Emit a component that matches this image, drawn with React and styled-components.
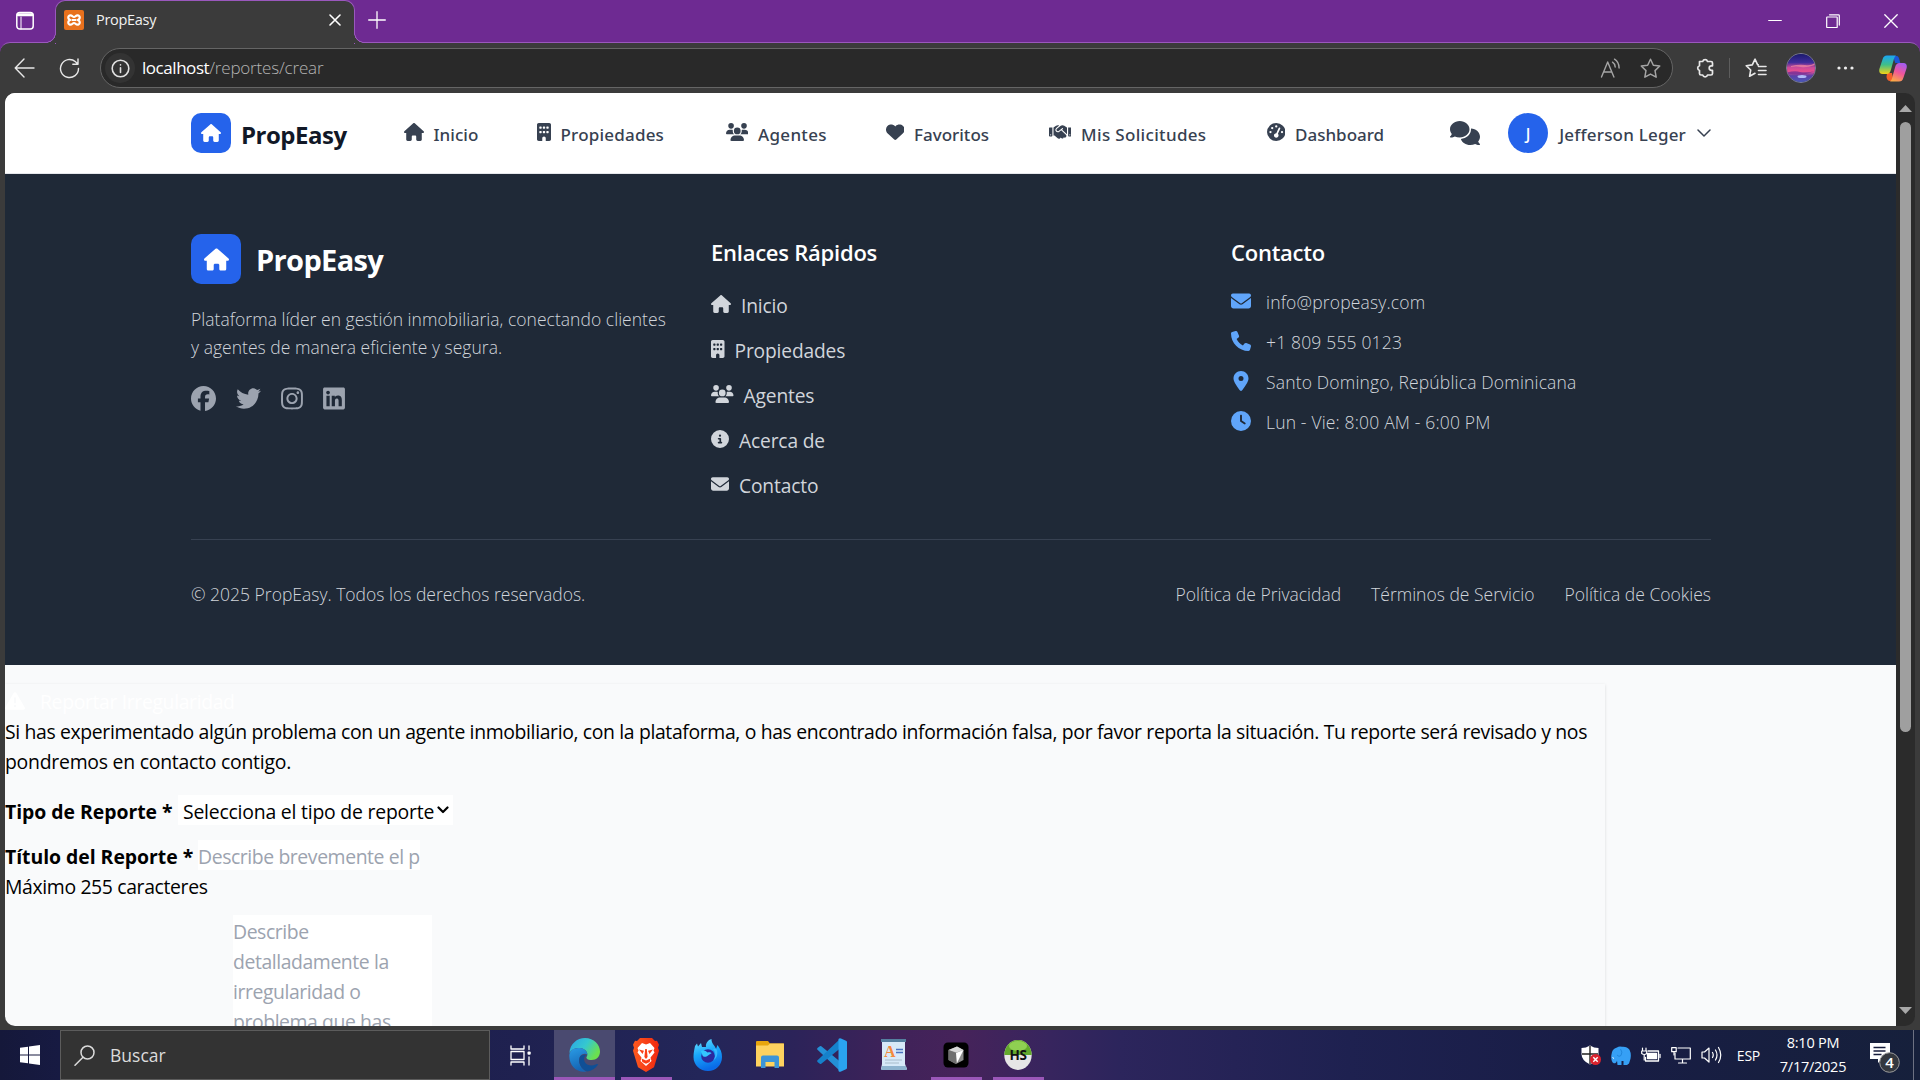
import React from 'react';
import styled, { createGlobalStyle } from 'styled-components';
import {
  FaHouse, FaBuilding, FaUsers, FaHeart, FaHandshake, FaGaugeHigh, FaComments, FaCircleInfo,
  FaEnvelope, FaPhone, FaLocationDot, FaClock, FaTriangleExclamation, FaFacebook, FaTwitter,
  FaInstagram, FaLinkedin,
} from 'react-icons/fa6';

const Global = createGlobalStyle`
  *, *::before, *::after { box-sizing: border-box; }
  body { margin: 0; overflow: hidden; background: #3b3b3b; }
  body, input, textarea, select { font-family: "Open Sans", "Noto Sans", sans-serif; }
  svg { display: block; flex: none; }
`;

/* ---------- window ---------- */
const Screen = styled.div`
  width: 1920px; height: 1080px; display: flex; flex-direction: column; overflow: hidden;
  background: #3b3b3b;
`;
const TabStrip = styled.div`
  height: 43px; flex: none; display: flex; align-items: flex-start; background: #6e2a92; color: #fff;
`;
const TabActions = styled.div`
  width: 55px; height: 42px; padding: 11px 0 0 15px;
`;
const Tab = styled.div`
  position: relative; width: 300px; height: 44px; padding: 0 13px 5px 8px; display: flex; align-items: center;
  background: #3b3b3b; border: 1px solid #9a58bd; border-bottom: 0; border-radius: 10px 10px 0 0; z-index: 1;
  &::before, &::after {
    content: ""; position: absolute; bottom: 1px; width: 10px; height: 10px;
  }
  &::before { left: -10px; background: radial-gradient(circle at 0 0, transparent 8.6px, #9a58bd 9px, #9a58bd 9.6px, #3b3b3b 10px); }
  &::after { right: -10px; background: radial-gradient(circle at 100% 0, transparent 8.6px, #9a58bd 9px, #9a58bd 9.6px, #3b3b3b 10px); }
`;
const TabTitle = styled.span`
  flex: 1; margin-left: 12px; font-size: 14.5px; letter-spacing: -0.3px; color: #f2f2f2; line-height: 20px;
`;
const NewTab = styled.div`margin: 11px 0 0 13px;`;
const WindowButtons = styled.div`
  margin-left: auto; padding: 14px 22px 0 0; display: flex; gap: 44px;
`;
const AddressRow = styled.div`background: #6e2a92; flex: none;`;
const Toolbar = styled.div`
  height: 51px; margin-top: -1px; display: flex; align-items: center; padding: 0 13px 0 14px;
  background: #3b3b3b; border-top: 1px solid #9a58bd; border-radius: 10px 10px 0 0; color: #e8e8e8;
`;
const Reload = styled.div`margin: 0 20px 0 24px;`;
const AddressBar = styled.div`
  width: 1573px; height: 40px; display: flex; align-items: center; padding: 0 11px 0 4px;
  background: #292929; border: 1px solid #656565; border-radius: 20px; color: #a5a5a5;
`;
const SiteInfo = styled.span`
  width: 30px; height: 30px; border-radius: 50%; display: grid; place-items: center; background: #333; color: #e0e0e0;
`;
const Url = styled.span`
  flex: 1; margin-left: 7px; font-size: 17px; font-weight: 300; letter-spacing: -0.18px; line-height: 24px; color: #b4b4b4;
  b { font-weight: 400; letter-spacing: -0.45px; color: #fff; }
`;
const BarIcons = styled.span`display: flex; gap: 19px; align-items: center;`;
const ToolIcons = styled.div`
  flex: 1; margin-left: 22px; display: flex; align-items: center;
`;
const Divider = styled.i`width: 1px; height: 20px; background: #5d5d5d; margin: 0 15px 0 14px;`;
const Profile = styled.div`
  width: 30px; height: 30px; margin: 0 21px 0 19px; border-radius: 50%; border: 1px solid #7f7f9b; overflow: hidden;
`;
const Dots = styled.div`margin-right: 25px;`;

/* ---------- page ---------- */
const Viewport = styled.div`
  height: 937px; flex: none; display: flex; padding: 0 5px 4px 5px; background: #3b3b3b;
`;
const Page = styled.div`
  width: 1891px; height: 933px; overflow: hidden; border-radius: 10px 0 0 10px; background: #f9fafb;
`;
const Scroll = styled.div`
  width: 19px; height: 933px; display: flex; flex-direction: column; align-items: center; padding: 12px 0;
  background: #2b2b2b; border-radius: 0 10px 10px 0;
`;
const Thumb = styled.div`width: 11px; height: 610px; margin: 10px 0 auto; border-radius: 6px; background: #9f9f9f;`;
const Navbar = styled.header`
  height: 81px; background: #fff; border-bottom: 1px solid #e5e7eb; padding: 0 185px 0 186px; display: flex; align-items: center;
  color: #374151;
`;
const Logo = styled.div`display: flex; align-items: center; gap: ${p => (p.$large ? 15 : 10)}px;`;
const LogoMark = styled.span`
  width: ${p => (p.$large ? 50 : 40)}px; height: ${p => (p.$large ? 50 : 40)}px; border-radius: 10px;
  display: grid; place-items: center; background: #2563eb; color: #fff;
  svg { height: ${p => (p.$large ? 25 : 20)}px; width: auto; }
`;
const LogoText = styled.span`
  font-weight: 700; font-size: ${p => (p.$large ? 29 : 24)}px; letter-spacing: ${p => (p.$large ? -0.65 : -0.5)}px;
  line-height: 36px; padding-top: ${p => (p.$large ? 2 : 3)}px; color: ${p => (p.$large ? '#fff' : '#111827')};
`;
const NavList = styled.nav`display: flex; margin-left: 57px; align-items: center;`;
const NavItem = styled.a`
  width: ${p => p.$w}px; display: flex; align-items: center; gap: 10px; white-space: nowrap;
  font: 500 17px/26px "Noto Sans", sans-serif; letter-spacing: ${p => p.$track}px;
  svg { height: 18px; width: ${p => p.$icon}px; margin-bottom: 2px; }
  span { padding-top: 3px; }
`;
const UserArea = styled.div`margin-left: auto; display: flex; align-items: center;`;
const Avatar = styled.span`
  width: 40px; height: 40px; margin: 0 11px 0 28px; border-radius: 50%; display: grid; place-items: center;
  background: #2563eb; color: #fff; font: 500 16px/24px "Noto Sans", sans-serif; padding-top: 2px;
`;
const UserName = styled.span`
  font: 500 17px/26px "Noto Sans", sans-serif; letter-spacing: 0.2px; padding-top: 3px; margin-right: 11px;
`;

const Footer = styled.footer`
  height: 491px; background: #1f2937; padding: 60px 185px 0 186px; color: #d1d5db;
`;
const Columns = styled.div`
  height: 306px; display: grid; grid-template-columns: repeat(3, 480px); gap: 40px; border-bottom: 1px solid #374151;
  margin-bottom: 41px;
`;
const About = styled.p`
  margin: 21px 0 24px; font-size: 17.5px; font-weight: 300; line-height: 28.4px; white-space: nowrap; letter-spacing: 0.03px;
`;
const Social = styled.div`
  display: flex; align-items: center; color: #9ca3af;
  svg { height: 25px; width: 25px; margin-right: 20px; }
  svg:nth-child(n + 3) { width: 22px; }
`;
const Heading = styled.h3`
  margin: 0 0 21px; color: #fff; font-size: 22px; font-weight: 600; line-height: 36px; letter-spacing: -0.24px;
`;
const LinkItem = styled.a`
  height: 30px; margin-bottom: 15px; display: flex; align-items: center; gap: 10px; font-size: 19.2px; letter-spacing: -0.15px;
  line-height: 30px;
  svg { height: 18px; width: ${p => p.$icon}px; margin-bottom: 4px; }
`;
const ContactItem = styled.div`
  height: 20px; margin-bottom: 20px; display: flex; align-items: center; gap: 15px; font-size: 17.5px; font-weight: 300;
  line-height: 20px; letter-spacing: 0.17px;
  svg { height: 20px; width: 20px; color: #60a5fa; }
  span { padding-top: 2px; }
`;
const ContactList = styled.div`margin-top: 1px;`;
const Legal = styled.div`
  display: flex; font-size: 17.5px; font-weight: 300; line-height: 26px; 
  span:first-child { margin-right: auto; }
  a { margin-left: 30px; }
`;

const FormBox = styled.section`
  width: 1600px; margin-top: 19px; height: 400px; padding-top: 3px; box-shadow: 0 1px 3px rgba(0, 0, 0, 0.13);
  font-size: 19.4px; line-height: 30px; letter-spacing: -0.36px; color: #000;
`;
const FormTitle = styled.h5`
  margin: 0; height: 30px; display: flex; align-items: center; gap: 15px; color: #fff; font-size: inherit; font-weight: 400;
  svg { height: 20px; width: 20px; margin-bottom: 2px; }
`;
const Intro = styled.p`
  margin: 0 0 18px; white-space: nowrap;
  span { display: block; letter-spacing: -0.24px; }
`;
const Field = styled.div`display: flex; align-items: center; height: 30px; margin-top: ${p => p.$top || 0}px;`;
const Label = styled.label`
  width: ${p => p.$w}px; padding-top: 4px; line-height: 26px; font-weight: 700; letter-spacing: -0.03px; white-space: nowrap;
`;
const SelectBox = styled.div`
  width: 275px; height: 30px; padding: 4px 4px 0 5px; display: flex; justify-content: space-between; line-height: 26px;
  letter-spacing: -0.21px; background: #fff; white-space: nowrap;
  svg { margin-top: 5px; }
`;
const TextInput = styled.input`
  width: 222px; height: 30px; padding: 3px 0 0; border: 0; font-size: 19.4px; letter-spacing: -0.41px; background: #fff;
  &::placeholder { color: #9ca3af; }
`;
const Hint = styled.div`margin: 2px 0 13px; line-height: 30px;`;
const Details = styled.textarea`
  display: block; width: 199px; height: 150px; margin-left: 228px; padding: 2px 0 0; border: 0; resize: none; overflow: hidden;
  font-size: 19.4px; line-height: 30px; letter-spacing: -0.42px; background: #fff;
  &::placeholder { color: #9ca3af; }
`;

/* ---------- taskbar ---------- */
const Taskbar = styled.div`
  height: 50px; flex: none; display: flex; align-items: center; color: #fff;
  background: linear-gradient(90deg, #15183a 0, #171a42 60px, #1f2150 520px, #232659 700px, #2b2359 790px, #402259 900px, #46235a 960px, #37255e 1050px, #2c255c 1120px, #1e2150 1350px, #181d45 1600px, #16203b 1920px);
`;
const Start = styled.div`width: 60px; display: grid; place-items: center;`;
const SearchBox = styled.div`
  width: 430px; height: 50px; border: 1px solid #5c5c5c; background: #333; display: flex; align-items: center; padding-left: 13px;
  gap: 15px; font-size: 17.5px; line-height: 24px; color: #dcdcdc;
`;
const TaskView = styled.div`width: 63px; display: grid; place-items: center; padding-right: 3px;`;
const AppSlot = styled.div`width: 62px; height: 50px; display: flex; justify-content: center;`;
const AppCell = styled.div`
  width: ${p => (p.$active ? 61 : 51)}px; height: 50px; display: grid; place-items: center;
  background: ${p => (p.$active ? '#4a4a70' : 'transparent')};
  border-bottom: 3px solid ${p => (p.$open ? '#9a57b8' : 'transparent')};
  svg { margin-top: 2px; }
`;
const Tray = styled.div`
  margin-left: auto; display: flex; align-items: center; height: 50px; font-size: 14.5px; letter-spacing: -0.25px;
`;
const TrayIcons = styled.div`display: flex; align-items: center; gap: 10px;`;
const Lang = styled.span`margin-left: 15px; font-size: 14px;`;
const Clock = styled.div`width: 68px; margin: 0 22px 0 19px; text-align: center; line-height: 24px; white-space: nowrap;`;
const Notice = styled.div`padding-top: 6px;`;
const Edge = styled.i`width: 1px; height: 50px; background: #6c7182; margin: 0 6px 0 13px;`;

const Line = ({ w, h = w, box, sw = 1.4, children }) => (
  <svg width={w} height={h} viewBox={box || `0 0 ${w} ${h}`} fill="none" stroke="currentColor" strokeWidth={sw} strokeLinecap="round" strokeLinejoin="round">{children}</svg>
);
const starPath = 'M10 1.2l2.7 5.7 6.1.8-4.5 4.3 1.1 6.3L10 15.3l-5.4 3 1.1-6.3L1.2 7.7l6.1-.8z';

const navItems = [
  { Icon: FaHouse, label: 'Inicio', icon: 20, w: 133, track: 0.05 },
  { Icon: FaBuilding, label: 'Propiedades', icon: 14, w: 189, track: 0.2 },
  { Icon: FaUsers, label: 'Agentes', icon: 22.5, w: 160, track: 0.3 },
  { Icon: FaHeart, label: 'Favoritos', icon: 18.5, w: 163, track: 0 },
  { Icon: FaHandshake, label: 'Mis Solicitudes', icon: 22.5, w: 218, track: 0.33 },
  { Icon: FaGaugeHigh, label: 'Dashboard', icon: 18.5, w: 118, track: 0 },
];
const quickLinks = [
  [FaHouse, 'Inicio', 20], [FaBuilding, 'Propiedades', 13.5], [FaUsers, 'Agentes', 22.5],
  [FaCircleInfo, 'Acerca de', 18], [FaEnvelope, 'Contacto', 18],
];
const contacts = [
  [FaEnvelope, 'info@propeasy.com'], [FaPhone, '+1 809 555 0123'],
  [FaLocationDot, 'Santo Domingo, República Dominicana'], [FaClock, 'Lun - Vie: 8:00 AM - 6:00 PM'],
];

const EdgeLogo = () => (
  <svg width="31" height="34" viewBox="0 0 31 34">
    <defs>
      <linearGradient id="ea" x1="0" y1="0" x2="1" y2=".5"><stop stopColor="#2aa4e8" /><stop offset=".55" stopColor="#35c8cf" /><stop offset="1" stopColor="#6be04e" /></linearGradient>
      <linearGradient id="eb" x1="0" y1="0" x2=".3" y2="1"><stop stopColor="#2a9ce6" /><stop offset="1" stopColor="#1565b4" /></linearGradient>
    </defs>
    <path d="M.4 15C1 6 8 0 16 0c9 0 15 6.500 15 13.500 0 5-3.500 8.500-8.500 8.500-4 0-5.500-1.500-5-3 1.500-1.500 1.500-6.500-4-8.500C8 9 2.500 11 .4 15z" fill="url(#ea)" />
    <path d="M.3 18C.2 12 6 9.300 11 10c4.500.6 7.500 3.500 7.300 6.500-1.600-1.400-6-1-7.500 2.500-2 5 .5 11 6.500 14.500C8 35 .3 28 .3 18z" fill="url(#eb)" />
    <path d="M10.600 19.500c-1.600 6 2 12 7.500 14 4.500-.5 8.500-3 11-7-.5-1-1.500-.5-2.500 0-5.500 2.500-11.500 0-11.500-5.500 0-1.500.7-3 1.900-4-3-.5-5.600.5-6.400 2.500z" fill="#0f4f96" />
  </svg>
);
const BraveLogo = () => (
  <svg width="26" height="34" viewBox="0 0 26 34">
    <defs><linearGradient id="br" x1="0" x2="1"><stop stopColor="#ff5a1f" /><stop offset="1" stopColor="#f0280f" /></linearGradient></defs>
    <path d="M7 0h12l3 3 2-.3 2 4-1 3 1 3-5 16.500L13 34 5 29.200 0 12.700l1-3-1-3 2-4L4 3z" fill="url(#br)" />
    <path d="M13 6.500l4-1.500 4.500 5-1 2.500 1 2-4 5 1 3.500-5.500 5-5.500-5 1-3.500-4-5 1-2-1-2.500L9 5z" fill="#fff" />
    <path d="M6 11.500l5 1.200-1.500 3.200zM20 11.500l-5 1.200 1.500 3.200zM12.200 11h1.600l.8 8-1.600 2-1.600-2zM8.500 20.500l4.500 2 4.500-2-.8 3.400-3.700 1.800-3.700-1.800z" fill="#fb3f16" />
  </svg>
);
const FirefoxLogo = () => (
  <svg width="30" height="32" viewBox="0 0 30 32">
    <defs><linearGradient id="ff" x1="0" y1="0" x2=".3" y2="1"><stop stopColor="#6fe3ff" /><stop offset=".5" stopColor="#19a8fb" /><stop offset="1" stopColor="#0a6be8" /></linearGradient></defs>
    <path d="M2 7l2-2.500 1 3L8 4l1 4h4c-.5-4 2-7 5.500-8 0 5 3 5.500 4.500 10l1.500-4c3 4 4.500 7.500 4.500 12C29 26 23 32 15 32S.5 26 .5 18C.5 13.500 1.500 10 2 7z" fill="url(#ff)" />
    <circle cx="15" cy="17" r="6.800" fill="#2b2a9e" />
    <path d="M8 12c3-1 5 0 6.500 1.500 2-.5 3.500 0 4 .8-2 .7-3 2.200-4.500 3-2 1-4 .5-4.500-.8z" fill="#34c5ff" />
    <path d="M20 10c3 3 3 8.500 0 11.500 4.500-2 5.500-8.500 3-12z" fill="#37b9ff" />
  </svg>
);
const FolderLogo = () => (
  <svg width="28" height="27" viewBox="0 0 28 27">
    <path d="M0 1a1 1 0 0 1 1-1h11l2 2.500h13a1 1 0 0 1 1 1V8H0z" fill="#e8a50d" />
    <path d="M0 4.500h12l2-2h14V25.500H0z" fill="#fed25f" />
    <path d="M5 27V16.500a2 2 0 0 1 2-2h14a2 2 0 0 1 2 2V27h-4.500v-6h-9v6z" fill="#3d95d8" />
  </svg>
);
const CodeLogo = () => (
  <svg width="30" height="34" viewBox="0 0 30 34">
    <path d="M.8 9.800l2-1.600a1.200 1.200 0 0 1 1.500 0L23 23.500V33L.8 12a1.400 1.400 0 0 1 0-2.200z" fill="#2490d6" />
    <path d="M.8 24.200l2 1.600a1.200 1.200 0 0 0 1.500 0L23 10.500V1L.8 22a1.400 1.400 0 0 0 0 2.200z" fill="#1581cb" />
    <path d="M21.500 1Q22.500-.3 24 .4l5 2.400a1.500 1.500 0 0 1 1 1.500v25.400a1.500 1.500 0 0 1-1 1.500l-5 2.400q-1.500.7-2.500-.6z" fill="#2aa3f0" />
  </svg>
);
const PadLogo = () => (
  <svg width="26" height="32" viewBox="0 0 26 32">
    <path d="M1 1h23v24l2 5H0l1-5z" fill="#d7e9f8" />
    <path d="M0 0h25v3H0z" fill="#557f9f" />
    <path d="M1 27h24l1 4H0z" fill="#8fb4cf" />
    <text x="3" y="18" fontFamily="Liberation Serif, serif" fontWeight="700" fontSize="16" fill="#f38a3c">A</text>
    <path d="M15 10.500h7M15 13.500h7" stroke="#4a73c0" strokeWidth="1.500" />
    <path d="M4 21h17M4 24h14" stroke="#a8bccb" />
  </svg>
);
const CubeLogo = () => (
  <svg width="26" height="26" viewBox="0 0 26 26">
    <rect x=".5" y=".5" width="25" height="25" rx="4.500" fill="#000" />
    <path d="M5.500 8L14 4.500 20.500 8v10l-7.500 4-7.500-4z" fill="#8c8c8c" />
    <path d="M5.500 8L14 4.500 20.500 8l-7 2.500z" fill="#d8d8d8" /><path d="M13 11l7.500-3-6.500 13z" fill="#fff" />
    <path d="M5.500 8l7.500 3v11l-7.500-4z" fill="#6f6f6f" />
  </svg>
);
const HsLogo = () => (
  <svg width="28" height="32" viewBox="0 0 28 32">
    <ellipse cx="14" cy="16" rx="13.700" ry="15" fill="#e6e6e6" />
    <path d="M.3 16a13.700 15 0 0 1 27.400 0z" fill="#63a92c" />
    <ellipse cx="14" cy="7" rx="9" ry="5" fill="#8fd052" />
    <text x="14" y="21" textAnchor="middle" fontFamily="Open Sans, sans-serif" fontWeight="700" fontSize="13.500" letterSpacing="-0.500" fill="#111">HS</text>
  </svg>
);

const apps = [
  [EdgeLogo, true, true], [BraveLogo, true], [FirefoxLogo], [FolderLogo], [CodeLogo], [PadLogo], [CubeLogo, true], [HsLogo, true],
];

const Browser = () => (
  <>
    <TabStrip>
      <TabActions>
        <Line w={20} sw={1.500}><rect x="1.800" y="1.500" width="16.400" height="16.500" rx="3" /><path d="M3 3.700h14" strokeWidth="3" /><path d="M6 6v12" strokeWidth="1" /></Line>
      </TabActions>
      <Tab>
        <svg width="20" height="20" viewBox="0 0 20 20">
          <rect width="20" height="20" rx="2" fill="#e8711d" />
          <path d="M5.500 5.500c2.500-1 3 1.500 4.500 1.500s2-2.500 4.500-1.500c2 1 1.500 3.500-.5 4.500 2 1 2.500 3.500.5 4.500-2.500 1-3-1.500-4.500-1.500s-2 2.500-4.500 1.500c-2-1-1.500-3.500.5-4.500-2-1-2.500-3.500-.5-4.500zM8 10h4" fill="none" stroke="#fff" strokeWidth="2.200" />
        </svg>
        <TabTitle>PropEasy</TabTitle>
        <Line w={12} sw={1.600}><path d="M1 1l10 10M11 1L1 11" /></Line>
      </Tab>
      <NewTab><Line w={18} sw={1.300}><path d="M9 .7v16.600M.7 9h16.600" /></Line></NewTab>
      <WindowButtons>
        <Line w={14} sw={1.200}><path d="M.7 6.500h12.600" /></Line>
        <Line w={14} sw={1.200}><rect x=".7" y="3" width="10.500" height="10.500" rx=".5" /><path d="M3.500.8h9q.8 0 .8.800v9.500" /></Line>
        <Line w={14} sw={1.300}><path d="M.8.8l12.400 12.400M13.200.8L.8 13.200" /></Line>
      </WindowButtons>
    </TabStrip>
    <AddressRow>
      <Toolbar>
        <Line w={21} h={20}><path d="M20 10H1.200M10 1L1.200 10l8.800 9" /></Line>
        <Reload><Line w={21}><path d="M19.500 10.500a9 9 0 1 1-3-6.700L19 6.200M19 1v5.200h-5.200" /></Line></Reload>
        <AddressBar>
          <SiteInfo><Line w={19} sw={1.600}><circle cx="9.500" cy="9.500" r="8.300" /><path d="M9.500 8.700v4.800M9.500 5.800v.2" /></Line></SiteInfo>
          <Url><b>localhost</b>/reportes/crear</Url>
          <BarIcons>
            <Line w={21}><path d="M1.500 19L7.700 4l6.200 15M3.600 14h8.200M12.500 4.200q2.500 1.600 2.700 4.800M14.500 1.200q4.600 3 4.600 8.800" /></Line>
            <Line w={21} box="0 0 20 20"><path d={starPath} /></Line>
          </BarIcons>
        </AddressBar>
        <ToolIcons>
          <Line w={20} sw={1.700}><path d="M4.500 3.500h3.200a2.500 2.500 0 0 1 4.800 0h3.500a1.500 1.500 0 0 1 1.500 1.500v2.800h-1a2.300 2.300 0 0 0 0 4.600h1v3.100a1.500 1.500 0 0 1-1.500 1.500h-3.500a2.500 2.500 0 0 1-4.800 0H6a1.500 1.500 0 0 1-1.500-1.500v-3a2.500 2.500 0 0 1 0-4.800z" /></Line>
          <Divider />
          <Line w={22} h={20} sw={1.600}><path d="M13.300 6.900h-.6L10 1.200 7.300 6.900l-6.100.8 4.500 4.300-1.100 6.300 5.400-3M13.500 8.500h7.500M13.500 12.500h7.500M13.500 16.500h7.500" /></Line>
          <Profile>
            <svg width="28" height="28" viewBox="0 0 28 28">
              <defs><linearGradient id="sky" x1="0" y1="0" x2="0" y2="1"><stop stopColor="#1b1a6e" /><stop offset=".3" stopColor="#3d2c9a" /><stop offset=".48" stopColor="#c94a9b" /><stop offset=".62" stopColor="#e84f8f" /><stop offset=".78" stopColor="#5c3fa8" /><stop offset="1" stopColor="#4a59b8" /></linearGradient></defs>
              <rect width="28" height="28" fill="url(#sky)" />
              <path d="M4 12q8-2 14-1t10-2v2q-9 3-14 2T4 13z" fill="#ee82a0" opacity=".8" /><path d="M0 18.500q8-2 13-.5t15-1l-9 3q-8 1-19-.5z" fill="#7a2f96" opacity=".8" />
              <ellipse cx="15" cy="22.500" rx="4.500" ry="1.500" fill="#bcc7ff" opacity=".9" />
            </svg>
          </Profile>
          <Dots><svg width="17" height="4" viewBox="0 0 17 4" fill="#eee"><circle cx="2" cy="2" r="1.600" /><circle cx="8.500" cy="2" r="1.600" /><circle cx="15" cy="2" r="1.600" /></svg></Dots>
          <svg width="28" height="27" viewBox="0 0 28 27">
            <defs>
              <linearGradient id="ca" x1="0" y1="0" x2="0" y2="1"><stop stopColor="#19a5f5" /><stop offset=".5" stopColor="#3fbf88" /><stop offset="1" stopColor="#f3d416" /></linearGradient>
              <linearGradient id="cb" x1=".7" y1="0" x2=".3" y2="1"><stop stopColor="#a45cf0" /><stop offset=".5" stopColor="#f0559a" /><stop offset="1" stopColor="#fba945" /></linearGradient>
            </defs>
            <path d="M14 1h3.500c2 0 2.500 2 3 4l.8 3h-5z" fill="#1b56d8" />
            <path d="M8 18l5 0 1.500 8H11c-2 0-3-1.500-3.500-4z" fill="#f4602a" />
            <path d="M8 0.500h9c-1.500 1-2 3-2.500 5L12 14.500c-.8 3-2 4.500-4.500 4.500H3.500C.5 19-.3 16.500.5 13.500L3.500 4.500C4.500 1.500 5.500.5 8 .5z" fill="url(#ca)" />
            <path d="M20 26.500h-9c1.500-1 2-3 2.500-5L16 12.500C16.800 9.500 18 8 20.500 8h4c3 0 3.800 2.500 3 5.500l-3 9c-1 3-2 4-4.500 4z" fill="url(#cb)" />
          </svg>
        </ToolIcons>
      </Toolbar>
    </AddressRow>
  </>
);

const Brand = ({ large }) => (
  <Logo $large={large}>
    <LogoMark $large={large}><FaHouse /></LogoMark>
    <LogoText $large={large}>PropEasy</LogoText>
  </Logo>
);

const ReportForm = () => (
  <FormBox>
    <FormTitle><FaTriangleExclamation />Reportar Irregularidad</FormTitle>
    <Intro>
      Si has experimentado algún problema con un agente inmobiliario, con la plataforma, o has encontrado información falsa, por favor reporta la situación. Tu reporte será revisado y nos
      <span>pondremos en contacto contigo.</span>
    </Intro>
    <Field>
      <Label $w={173}>Tipo de Reporte *</Label>
      <SelectBox>
        Selecciona el tipo de reporte
        <Line w={12} h={12} sw={2.200}><path d="M1.500 3.500L6 8l4.500-4.500" /></Line>
      </SelectBox>
    </Field>
    <Field $top={15}>
      <Label $w={193}>Título del Reporte *</Label>
      <TextInput placeholder="Describe brevemente el p" />
    </Field>
    <Hint>Máximo 255 caracteres</Hint>
    <Details placeholder="Describe detalladamente la irregularidad o problema que has" />
  </FormBox>
);

const SystemTray = () => (
  <Tray>
    <TrayIcons>
      <svg width="20" height="20" viewBox="0 0 20 20"><path d="M9 .5q4 2.500 8.500 2.500v6q0 6.500-8.500 10.500Q.5 15.500.5 9V3Q5 3 9 .5z" fill="#fff" /><path d="M9 1v18M1 9h16" stroke="#222" strokeWidth="1.400" /><circle cx="14.500" cy="14.500" r="5.500" fill="#d9232e" /><path d="M12.300 12.300l4.400 4.400M16.700 12.300l-4.400 4.400" stroke="#fff" strokeWidth="1.400" /></svg>
      <svg width="20" height="19" viewBox="0 0 20 19"><path d="M6 1.500Q8 0 11 .8q5-.5 7.500 3 2 4 1 9L18 17.500 16 19h-3.500v-4h-2v4H6.500L6 14.500q-.5 3-3.200 2.800Q-.2 15.500.3 9.500.8 2.500 6 1.500z" fill="#36a0f5" /><path d="M9.500 3q2.500 3 .5 6.500-2 2-4-.5" stroke="#2187dc" fill="none" /><path d="M1.500 11.500l1.500 1" stroke="#fff" /></svg>
      <Line w={20} h={16} sw={1.300}><path d="M1.500 1v3M5 1v3M.7 4h5v2.500q-2.500 2-5 0zM3.200 8v5" strokeWidth="1.200" /><path d="M7 4h10.500v10H4.500v-3.500" /><path d="M6.500 6.500h9v5h-9z" fill="currentColor" /><path d="M19 7.500v3" /></Line>
      <Line w={20} h={17} sw={1.200}><path d="M7 1h12.300v11H4V6M11.500 12v3.500M7.500 16h8" /><path d="M.7.7h4.500v4H.7zM3 5v3" /></Line>
      <Line w={21} h={18} sw={1.200}><path d="M1 6v6h2.500L8 16V2L3.500 6zM11.500 6.500q1.500 2.500 0 5M14.500 4q3 5 0 10M17.500 1.500q4.500 7.500 0 15" /></Line>
    </TrayIcons>
    <Lang>ESP</Lang>
    <Clock>8:10 PM<br />7/17/2025</Clock>
    <Notice>
      <svg width="31" height="32" viewBox="0 0 31 32">
        <path d="M1 1h20v16h-8l-4 4v-4H1z" fill="#fff" /><path d="M4.500 5.500h12M4.500 9h12M4.500 12.500h8" stroke="#171d3c" strokeWidth="1.300" />
        <circle cx="20.500" cy="20.500" r="9.800" fill="#34383f" stroke="#9b9b9b" />
        <text x="20.500" y="26" textAnchor="middle" fontFamily="Open Sans, sans-serif" fontWeight="600" fontSize="15" fill="#fff">4</text>
      </svg>
    </Notice>
    <Edge />
  </Tray>
);

export default function App() {
  return (
    <Screen>
      <Global />
      <Browser />
      <Viewport>
        <Page>
          <Navbar>
            <Brand />
            <NavList>
              {navItems.map(({ Icon, label, icon, w, track }) => (
                <NavItem key={label} $w={w} $icon={icon} $track={track}><Icon preserveAspectRatio="none" /><span>{label}</span></NavItem>
              ))}
            </NavList>
            <UserArea>
              <FaComments size={30} />
              <Avatar>J</Avatar>
              <UserName>Jefferson Leger</UserName>
              <Line w={14} h={9} sw={1.500}><path d="M1 1l6 6 6-6" /></Line>
            </UserArea>
          </Navbar>
          <Footer>
            <Columns>
              <div>
                <Brand large />
                <About>Plataforma líder en gestión inmobiliaria, conectando clientes<br />y agentes de manera eficiente y segura.</About>
                <Social><FaFacebook /><FaTwitter /><FaInstagram /><FaLinkedin /></Social>
              </div>
              <div>
                <Heading>Enlaces Rápidos</Heading>
                {quickLinks.map(([Icon, label, icon]) => <LinkItem key={label} $icon={icon}><Icon />{label}</LinkItem>)}
              </div>
              <div>
                <Heading>Contacto</Heading>
                <ContactList>
                  {contacts.map(([Icon, label]) => <ContactItem key={label}><Icon /><span>{label}</span></ContactItem>)}
                </ContactList>
              </div>
            </Columns>
            <Legal>
              <span>© 2025 PropEasy. Todos los derechos reservados.</span>
              <a>Política de Privacidad</a><a>Términos de Servicio</a><a>Política de Cookies</a>
            </Legal>
          </Footer>
          <ReportForm />
        </Page>
        <Scroll>
          <svg width="13" height="7" viewBox="0 0 13 7"><path d="M0 7l6.500-7L13 7z" fill="#a8a8a8" /></svg>
          <Thumb />
          <svg width="13" height="7" viewBox="0 0 13 7"><path d="M0 0l6.500 7L13 0z" fill="#a8a8a8" /></svg>
        </Scroll>
      </Viewport>
      <Taskbar>
        <Start><svg width="20" height="20" viewBox="0 0 20 20" fill="#fff"><path d="M0 2.800l8-1.100v7.800H0zM9 1.600L20 0v9.500H9zM0 10.500h8v7.800l-8-1.100zM9 10.500h11V20L9 18.400z" /></svg></Start>
        <SearchBox>
          <Line w={21} h={21} sw={1.500}><circle cx="13.500" cy="7.500" r="6.500" /><path d="M9 12.200L1 20.200" /></Line>
          Buscar
        </SearchBox>
        <TaskView><Line w={21} h={21} sw={1.300}><path d="M1 1v3h13V1M1 20v-3h13v3M1 6.500h13v8H1zM19 1v3.500M19 12v8" /><path d="M18.500 7.500h1.200v1.200h-1.200z" strokeWidth="2" /></Line></TaskView>
        {apps.map(([Icon, open, active], i) => (
          <AppSlot key={i}><AppCell $open={open} $active={active}><Icon /></AppCell></AppSlot>
        ))}
        <SystemTray />
      </Taskbar>
    </Screen>
  );
}
